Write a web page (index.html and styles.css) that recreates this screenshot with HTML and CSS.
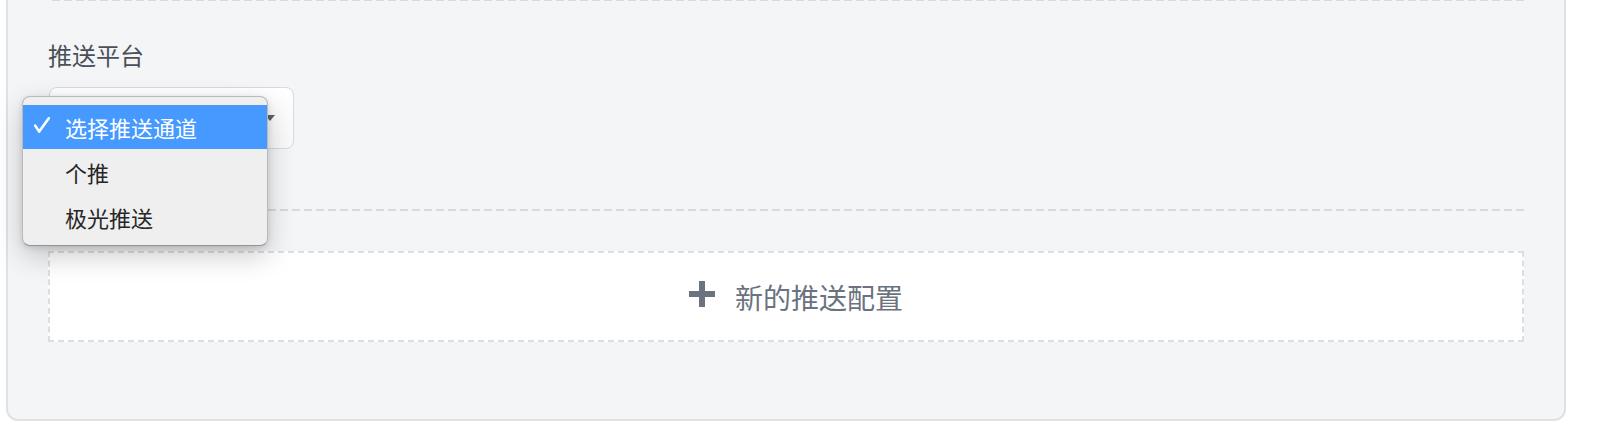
FILE: index.html
```html
<!DOCTYPE html>
<html lang="zh-CN">
<head>
<meta charset="utf-8">
<title>推送配置</title>
<link rel="stylesheet" href="styles.css">
</head>
<body>
  <div class="card">
    <section class="section">
      <div class="field-label">推送平台</div>
      <div class="select-wrap">
        <div class="select">
          <span class="select-value">选择推送通道</span>
          <span class="caret"></span>
        </div>
        <ul class="menu">
          <li class="menu-item selected">
            <span class="check">
              <svg width="16" height="16" viewBox="0 0 16 16" aria-hidden="true">
                <path d="M1.2 8.6 L5.2 14.6 L14.8 1.2" fill="none" stroke="#ffffff" stroke-width="2.6" stroke-linecap="round" stroke-linejoin="round"/>
              </svg>
            </span><span>选择推送通道</span>
          </li>
          <li class="menu-item tall"><span class="check"></span><span>个推</span></li>
          <li class="menu-item"><span class="check"></span><span>极光推送</span></li>
        </ul>
      </div>
    </section>
    <div class="add-area">
      <div class="add-btn">
        <svg class="plus" width="26" height="26" viewBox="0 0 26 26" aria-hidden="true">
          <rect x="10" y="0" width="6" height="26" fill="#6b7380"/>
          <rect x="0" y="10" width="26" height="6" fill="#6b7380"/>
        </svg>
        <span class="add-text">新的推送配置</span>
      </div>
    </div>
  </div>
</body>
</html>
```

FILE: styles.css
```css
html, body {
  margin: 0;
  padding: 0;
  background: #ffffff;
}

body {
  padding: 0 32px 0 6px;
  font-family: "Noto Sans CJK SC", "Noto Sans", sans-serif;
}

.card {
  background: #f4f5f7;
  border: 2px solid #dfe1e5;
  border-top: none;
  border-radius: 0 0 12px 12px;
  padding: 0 40px 77px 40px;
}

.section {
  padding: 39px 0 62px 0;
  background-image:
    linear-gradient(to right, #d6d9de 8px, transparent 8px),
    linear-gradient(to right, #d6d9de 8px, transparent 8px);
  background-size: 12px 2px, 12px 2px;
  background-repeat: repeat-x, repeat-x;
  background-position: 4px -1px, 4px bottom;
}

.field-label {
  font-size: 24px;
  line-height: 32px;
  color: #4b5058;
  margin-bottom: 16px;
}

.select-wrap {
  position: relative;
  width: 245px;
  height: 62px;
  margin-left: 1px;
}

.select {
  box-sizing: border-box;
  width: 100%;
  height: 100%;
  border: 1px solid #d9dadd;
  border-radius: 8px;
  background: linear-gradient(#ffffff, #f9f9f9);
  display: flex;
  align-items: center;
  justify-content: space-between;
  padding: 0 18px 0 16px;
  font-size: 22px;
  color: #333;
}

.select-value {
  visibility: hidden;
}

.caret {
  width: 0;
  height: 0;
  border-left: 5px solid transparent;
  border-right: 5px solid transparent;
  border-top: 6px solid #5f6166;
}

.menu {
  position: absolute;
  left: -27px;
  top: 9px;
  box-sizing: border-box;
  width: 246px;
  margin: 0;
  padding: 8px 0 6px 0;
  list-style: none;
  background: #efefef;
  border: 1px solid rgba(0, 0, 0, 0.22);
  border-bottom-color: rgba(0, 0, 0, 0.38);
  border-radius: 8px;
  box-shadow: 0 10px 28px rgba(0, 0, 0, 0.2), 0 2px 6px rgba(0, 0, 0, 0.12);
}

.menu-item {
  display: flex;
  align-items: center;
  height: 44px;
  padding-left: 10px;
  font-size: 22px;
  line-height: 1;
  color: #262626;
}

.menu-item.tall {
  height: 46px;
}

.menu-item.selected {
  background: #4599ff;
  color: #ffffff;
}

.check {
  display: flex;
  align-items: center;
  width: 32px;
  height: 22px;
}

.check svg {
  display: block;
  margin-left: 1px;
  margin-top: -4px;
}

.add-area {
  padding-top: 40px;
}

.add-btn {
  box-sizing: border-box;
  height: 91px;
  background: #ffffff;
  border: 2px dashed #dcdee2;
  display: flex;
  align-items: center;
  justify-content: center;
  padding-left: 20px;
  gap: 20px;
}

.plus {
  display: block;
  margin-bottom: 6px;
}

.add-text {
  font-size: 28px;
  line-height: 28px;
  color: #6b7280;
}
```
